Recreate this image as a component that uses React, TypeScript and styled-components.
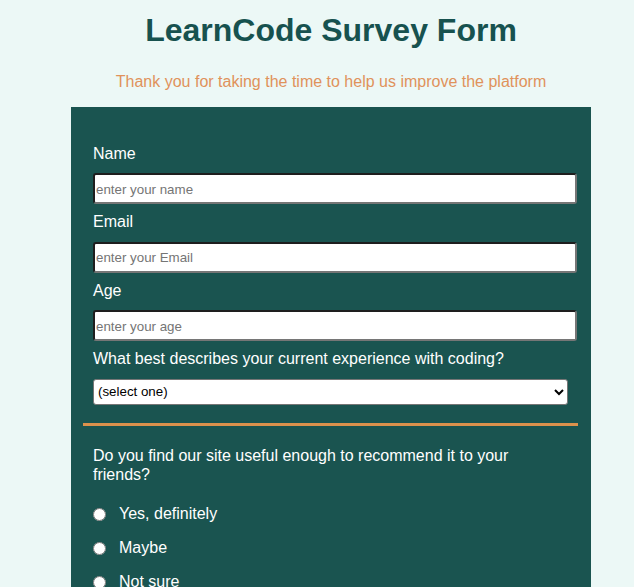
import React from "react";
import styled, { createGlobalStyle } from "styled-components";

const Global = createGlobalStyle`
  html, body { margin: 0; padding: 0; overflow: hidden; }
  body { background: #ecf8f6; font-family: "Liberation Sans", Arial, sans-serif; }
`;

const Page = styled.div`
  padding-left: 28px;
  display: flex;
  flex-direction: column;
  align-items: center;
`;

const Title = styled.h1`
  margin: 12px 0 0;
  font-size: 32px;
  font-weight: 700;
  color: #17524f;
  text-align: center;
`;

const Subtitle = styled.p`
  margin: 24px 0 16px;
  font-size: 16px;
  color: #e0925b;
  text-align: center;
`;

const Panel = styled.form`
  width: 520px;
  box-sizing: border-box;
  background: #1a5450;
  padding: 38px 14px 40px 12px;
  color: #ffffff;
`;

const Group = styled.div`
  padding-left: 10px;
  display: flex;
  flex-direction: column;
`;

const Label = styled.label`
  display: block;
  font-size: 16px;
  line-height: 18.4px;
  margin-bottom: 10px;
`;

const TextInput = styled.input`
  box-sizing: border-box;
  width: 100%;
  height: 31px;
  margin: 0 0 9px;
  padding: 1px 1px 0;
  font-family: "Liberation Sans", Arial, sans-serif;
  font-size: 13.33px;
  background: #fff;
  border-style: solid;
  border-width: 2px;
  border-color: #1e1e1e #767676 #767676 #1e1e1e;
  border-radius: 3px;
  &::placeholder { color: #757575; }
`;

const Select = styled.select`
  box-sizing: border-box;
  width: 475px;
  height: 26px;
  margin: 0;
  font-family: "Liberation Sans", Arial, sans-serif;
  font-size: 13.33px;
  color: #000;
  background: #fff;
  border: 1px solid #767676;
  border-radius: 3px;
`;

const Divider = styled.div`
  margin: 18.5px 0 21px;
  height: 3px;
  width: 495px;
  background-color: #dc914c;
`;

const Question = styled.p`
  margin: 0 0 13px;
  max-width: 440px;
  font-size: 16px;
  line-height: 18.4px;
`;

const RadioRow = styled.label`
  display: flex;
  align-items: center;
  height: 34px;
  font-size: 16px;
`;

const Radio = styled.input`
  width: 13px;
  height: 13px;
  margin: 2px 13px 0 0;
  accent-color: #ffffff;
`;

export default function App() {
  return (
    <>
      <Global />
      <Page>
        <Title>LearnCode Survey Form</Title>
        <Subtitle>Thank you for taking the time to help us improve the platform</Subtitle>
        <Panel>
          <Group>
            <Label htmlFor="name">Name</Label>
            <TextInput id="name" placeholder="enter your name" />
            <Label htmlFor="email">Email</Label>
            <TextInput id="email" placeholder="enter your Email" />
            <Label htmlFor="age">Age</Label>
            <TextInput id="age" placeholder="enter your age" />
            <Label htmlFor="exp">What best describes your current experience with coding?</Label>
            <Select id="exp" defaultValue="">
              <option value="">(select one)</option>
              <option>Beginner</option>
              <option>Intermediate</option>
              <option>Advanced</option>
            </Select>
          </Group>
          <Divider role="separator" />
          <Group>
            <Question>Do you find our site useful enough to recommend it to your friends?</Question>
            <RadioRow><Radio type="radio" name="rec" />Yes, definitely</RadioRow>
            <RadioRow><Radio type="radio" name="rec" />Maybe</RadioRow>
            <RadioRow><Radio type="radio" name="rec" />Not sure</RadioRow>
          </Group>
        </Panel>
      </Page>
    </>
  );
}
